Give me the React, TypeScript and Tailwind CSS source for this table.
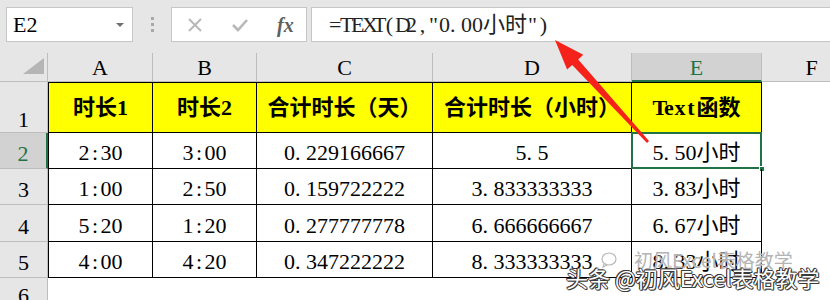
import React from "react";

const serif = "[font-family:'Liberation_Serif','Noto_Sans_CJK_SC',serif]";

// SimSun style: every ASCII glyph sits in a half-width cell
function Sim({ t }: { t: string }) {
  return (
    <>
      {Array.from(t).map((c, i) =>
        c.charCodeAt(0) < 128 ? (
          <span key={i} className={c === "." ? "inline-block w-[0.5em] text-left" : "inline-block w-[0.5em] text-center"}>
            {c}
          </span>
        ) : (
          <span key={i}>{c}</span>
        )
      )}
    </>
  );
}

const colW = ["w-[105px] border-l", "w-[104px]", "w-[176px]", "w-[199px]", "w-[130px]"];
const letters = ["A", "B", "C", "D", "E"];
const heads = ["时长1", "时长2", "合计时长（天）", "合计时长（小时）", "Text函数"];
const rows = [
  { h: "h-[36px]", d: ["2:30", "3:00", "0.229166667", "5.5", "5.50小时"] },
  { h: "h-[36px]", d: ["1:00", "2:50", "0.159722222", "3.833333333", "3.83小时"] },
  { h: "h-[37px]", d: ["5:20", "1:20", "0.277777778", "6.666666667", "6.67小时"] },
  { h: "h-[36px]", d: ["4:00", "4:20", "0.347222222", "8.333333333", "8.33小时"] },
];

function TopBar() {
  return (
    <div className="h-[53px] bg-[#e6e6e6] flex items-start pt-[7px] pl-[6px]">
      <div className="w-[127px] h-[35px] bg-white border border-[#c6c6c6] flex items-center justify-between pl-[6px] pr-[8px]">
        <span className="text-[22px] leading-none">E2</span>
        <span className="w-0 h-0 border-l-[4px] border-r-[4px] border-t-[4px] border-l-transparent border-r-transparent border-t-[#6f6f6f]" />
      </div>
      <div className="w-[38px] h-[35px] flex flex-col items-center justify-center gap-[3px]">
        <span className="w-[3px] h-[3px] bg-[#a8a8a8]" />
        <span className="w-[3px] h-[3px] bg-[#a8a8a8]" />
        <span className="w-[3px] h-[3px] bg-[#a8a8a8]" />
      </div>
      <div className="w-[136px] h-[35px] bg-white border border-[#c6c6c6] flex items-center pl-[15px] gap-[28px]">
        <svg width="16" height="16" viewBox="0 0 16 16">
          <path d="M2 2L14 14M14 2L2 14" stroke="#b8b8b8" strokeWidth="2" />
        </svg>
        <svg width="18" height="16" viewBox="0 0 18 16">
          <path d="M2 8L7 13L16 3" stroke="#b8b8b8" strokeWidth="2.6" fill="none" />
        </svg>
        <span className="italic font-bold text-[20px] text-[#5f5f5f] leading-none">fx</span>
      </div>
      <div className="ml-[4px] flex-1 h-[35px] bg-white border border-r-0 border-[#c6c6c6] flex items-center pl-[17px] text-[22px] text-[#222]">
        <Sim t={'=TEXT(D2,"0.00小时")'} />
      </div>
    </div>
  );
}

function ColHeader() {
  return (
    <div className="h-[29px] flex bg-[#e6e6e6] text-[22px]">
      <div className="w-[48px] shrink-0 border-r border-b border-[#bdbdbd] flex items-end justify-end pr-[3px] pb-[7px]">
        <span className="w-0 h-0 [border-bottom:16px_solid_#b5b5b5] [border-left:21px_solid_transparent]" />
      </div>
      {letters.map((l, i) => (
        <div
          key={l}
          className={
            i === 4
              ? "w-[130px] shrink-0 border-r border-[#bdbdbd] border-b-2 border-b-[#217346] bg-[#d2d2d2] text-[#217346] flex items-end justify-center leading-[20px] pb-[2px]"
              : (i === 0 ? "w-[105px] " : i === 1 ? "w-[104px] " : i === 2 ? "w-[176px] " : "w-[199px] ") +
                "shrink-0 border-r border-b border-[#bdbdbd] flex items-end justify-center leading-[20px] pb-[3px]"
          }
        >
          {l}
        </div>
      ))}
      <div className="w-[100px] shrink-0 border-r border-b border-[#bdbdbd] flex items-end justify-center leading-[20px] pb-[3px]">F</div>
    </div>
  );
}

export default function App() {
  return (
    <div className={`relative w-[830px] h-[300px] overflow-hidden bg-white text-black ${serif}`}>
      <TopBar />
      <ColHeader />
      <div className="flex h-[51px]">
        <div className="w-[48px] shrink-0 bg-[#e6e6e6] border-r border-b border-[#bdbdbd] flex items-end justify-center text-[22px] leading-[24px]">1</div>
        {heads.map((h, i) => (
          <div
            key={h}
            className={`${colW[i]} shrink-0 border-t border-r border-b border-black bg-[#ffff00] flex items-center justify-center text-[22px] font-bold`}
          >
            <Sim t={h} />
          </div>
        ))}
      </div>
      {rows.map((r, ri) => (
        <div key={ri} className={`flex ${r.h}`}>
          <div
            className={
              ri === 0
                ? "w-[48px] shrink-0 bg-[#d2d2d2] text-[#217346] border-r-2 border-r-[#217346] border-b border-b-[#bdbdbd] flex items-end justify-center text-[22px] leading-[24px] pb-[2px]"
                : "w-[48px] shrink-0 bg-[#e6e6e6] border-r border-b border-[#bdbdbd] flex items-end justify-center text-[22px] leading-[24px] pb-[2px]"
            }
          >
            {ri + 2}
          </div>
          {r.d.map((v, i) => (
            <div
              key={i}
              className={`${colW[i]} relative shrink-0 border-r border-b border-black flex items-end justify-center text-[22px] leading-[24px] pb-[3px]`}
            >
              <Sim t={v} />
              {ri === 0 && i === 4 && (
                <>
                  <div className="absolute -left-[1px] -top-[1px] -right-[1px] -bottom-[1px] border-2 border-[#217346]" />
                  <div className="absolute -right-[4px] -bottom-[4px] w-[6px] h-[6px] bg-[#217346] border border-white" />
                </>
              )}
            </div>
          ))}
        </div>
      ))}
      <div className="flex h-[30px]">
        <div className="w-[48px] shrink-0 bg-[#e6e6e6] border-r border-[#bdbdbd] flex items-end justify-center text-[22px] leading-[24px]">6</div>
      </div>

      <svg className="absolute left-0 top-0 pointer-events-none" width="830" height="300">
        <polygon points="555,40 583.3,54.8 578.2,59.5 649,141 647,143 572.2,64.9 567.1,69.6" fill="#f5221b" />
      </svg>

      <div className="absolute left-[600px] top-[249px] flex items-center gap-[14px] text-[19px] leading-[22px] text-[#b4b4b4] [font-family:'Noto_Sans_CJK_SC',sans-serif] [text-shadow:0_0_1px_#ffffff]">
        <svg width="20" height="18" viewBox="0 0 20 18">
          <ellipse cx="9" cy="8" rx="7" ry="6" fill="none" stroke="#b8b8b8" strokeWidth="1.2" />
          <path d="M4 13L3 16L7 14" fill="none" stroke="#b8b8b8" strokeWidth="1.2" />
        </svg>
        <span>初风Excel表格教学</span>
      </div>
      <div className="absolute left-[566px] top-[263px] text-[22px] leading-[28px] text-white [font-family:'Noto_Sans_CJK_SC',sans-serif] [text-shadow:1px_0_0_#3a3a3a,-1px_0_0_#3a3a3a,0_1px_0_#3a3a3a,0_-1px_0_#3a3a3a,1px_1px_0_#3a3a3a,-1px_-1px_0_#3a3a3a]">
        头条 @初风Excel表格教学
      </div>
    </div>
  );
}
